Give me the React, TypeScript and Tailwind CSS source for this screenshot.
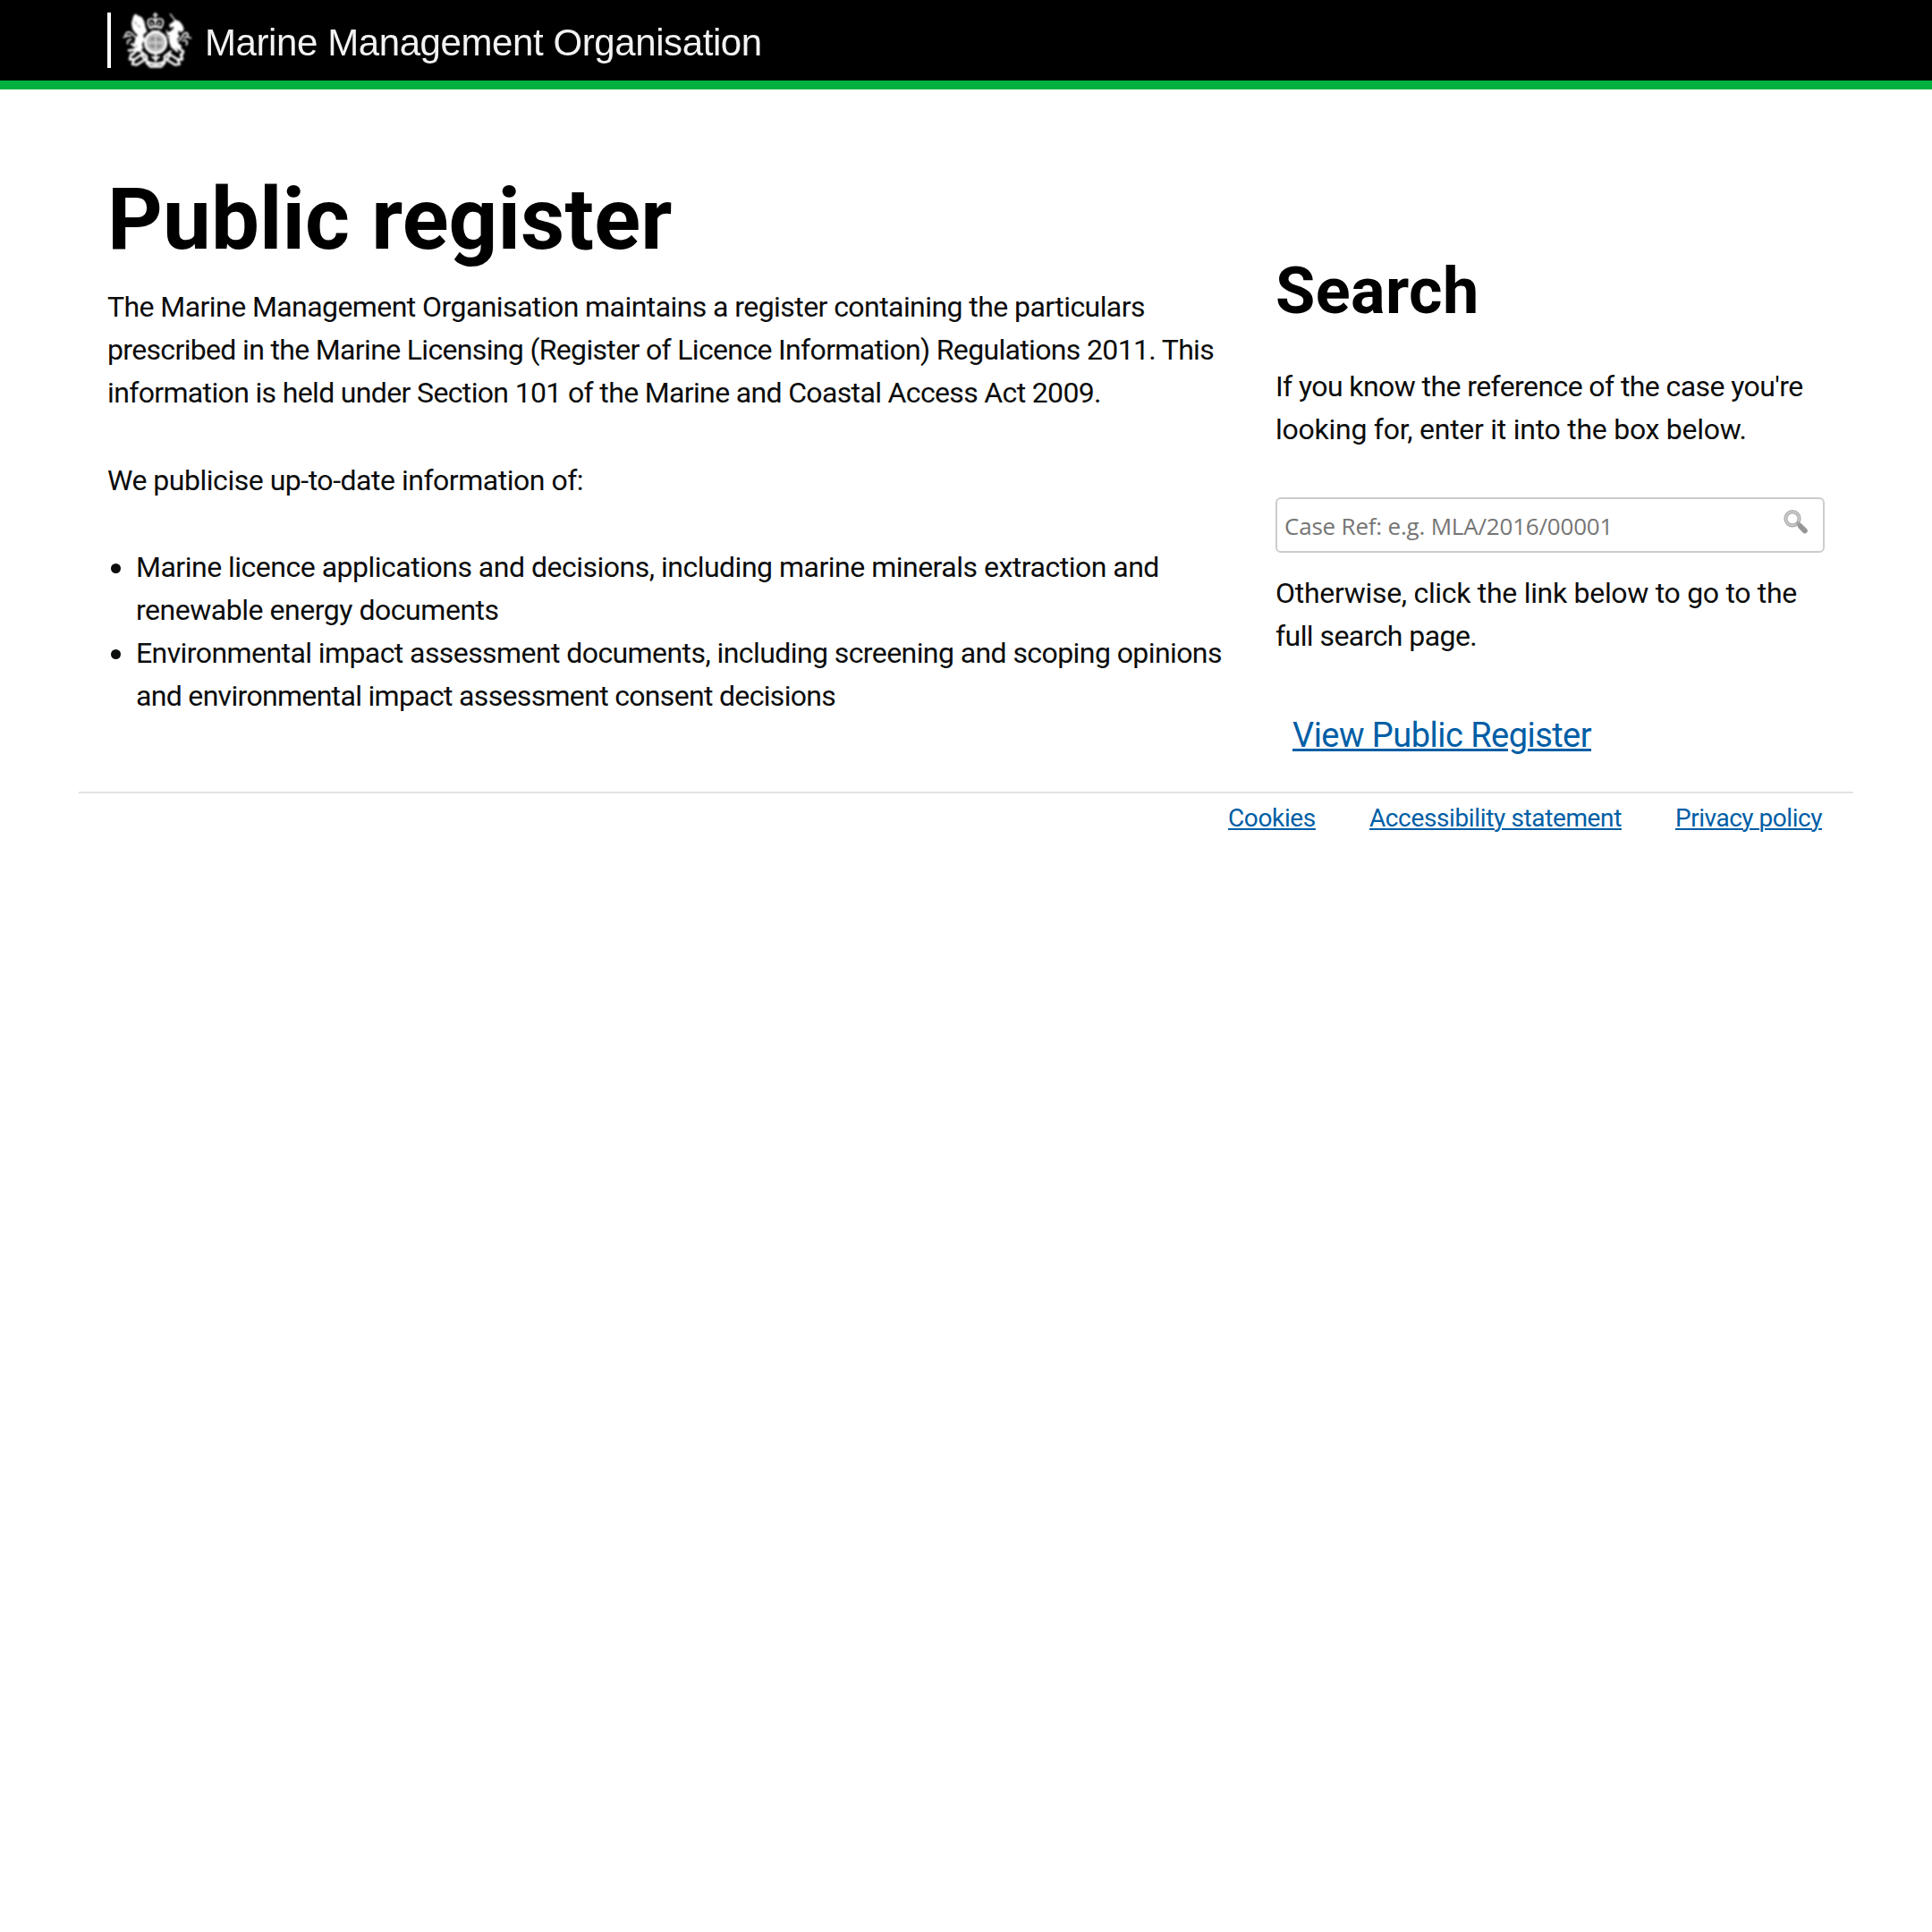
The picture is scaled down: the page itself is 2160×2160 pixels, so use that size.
import type { ReactNode } from "react";

function Line({ className, children }: { className: string; children: ReactNode }) {
  return <span className={`block whitespace-nowrap ${className}`}>{children}</span>;
}

function Crest() {
  return (
    <svg viewBox="0 0 270 240" className="h-[80px] w-[90px] shrink-0 blur-[0.8px]" fill="none" stroke="#fff" strokeLinecap="round" strokeLinejoin="round">
      {/* crown */}
      <path d="M131 29V46M125 35H137" strokeWidth="5" />
      <path d="M112 76C102 60 105 48 118 48C125 48 129 52 131 58C134 52 138 48 145 48C159 48 161 61 151 76" strokeWidth="5" />
      <path d="M131 50V70M117 60L121 68M145 60L141 68" strokeWidth="5" />
      <path d="M113 78Q131 71 150 78" strokeWidth="7" />
      <path d="M118 88H146" stroke="#bbb" strokeWidth="4" />
      {/* shield and garter */}
      <circle cx="132" cy="128" r="35" fill="#a2a2a2" strokeWidth="9" />
      <circle cx="132" cy="128" r="25" stroke="#e2e2e2" strokeWidth="3" />
      <path d="M132 104V152M108 128H156" stroke="#ddd" strokeWidth="4" />
      <path d="M116 114H126M138 116H149M116 140H127M138 141H148" stroke="#777" strokeWidth="4" />
      {/* lion */}
      <path d="M59 40L65 34L72 39L82 43C90 49 94 63 96 77L101 90L88 102L93 117L84 133L88 146L78 158L68 155L72 138L61 133L66 114L74 102L64 93L56 81L53 63Z" fill="#fff" strokeWidth="4" />
      <path d="M63 58L67 66M73 70L79 76" stroke="#999" strokeWidth="4" />
      <path d="M68 112C58 107 54 95 45 93C36 91 29 99 31 105M49 106C42 101 34 107 25 110M50 117C41 118 36 122 38 132" strokeWidth="5" />
      <path d="M72 144C62 154 51 154 42 154M70 152L55 168M52 133L63 140" strokeWidth="8" />
      {/* unicorn */}
      <path d="M181 32L199 56" strokeWidth="4" />
      <path d="M199 54L211 58L221 71L225 84L217 92L209 83L205 98L211 108L202 115L207 131L218 140L211 150L197 144L184 138L179 125L180 105L169 97L184 91L195 80L193 69L183 77L179 69L190 61Z" fill="#fff" strokeWidth="4" />
      <path d="M168 87L175 99M171 106L179 115" strokeWidth="4" />
      <path d="M210 121C222 116 221 95 234 95C242 96 243 105 233 110M228 112C237 105 242 109 250 113M222 122C232 117 242 123 235 136" strokeWidth="5" />
      <path d="M201 140L225 158L218 174M186 140L204 156" strokeWidth="8" />
      {/* ribbon */}
      <path d="M50 167L45 184L60 184L54 200L69 202L96 185L84 168L65 182" strokeWidth="8" />
      <path d="M216 167L222 184L206 184L212 200L197 202L169 185L181 168L202 182" strokeWidth="8" />
      <path d="M84 158L102 174V196L114 208H151L162 196V174L182 158" strokeWidth="8" />
      <path d="M108 194Q132 204 157 194" strokeWidth="9" />
      <path d="M132 168V188M121 176L128 181M143 176L136 181" strokeWidth="7" />
    </svg>
  );
}

function MagnifierIcon() {
  return (
    <svg viewBox="0 0 30 30" className="h-[30px] w-[30px] blur-[0.6px]" fill="none" strokeLinecap="round">
      <circle cx="11" cy="11.8" r="7.6" stroke="#b0b0b0" strokeWidth="4.2" />
      <circle cx="11" cy="11.8" r="7.6" stroke="#d2d2d2" strokeWidth="1.2" />
      <path d="M17.5 17.5L20 20" stroke="#a4a4a4" strokeWidth="4.5" />
      <path d="M20 20.5L24.8 25.4" stroke="#969696" strokeWidth="6" />
    </svg>
  );
}

const link = "text-[#005ea5] underline underline-offset-[2px]";

export default function App() {
  return (
    <div className="min-h-[2160px] bg-white font-['Roboto',sans-serif] text-[32px] leading-[48px] text-[#0b0c0c]">
      <header className="flex h-[100px] items-start border-b-[10px] border-[#00b140] bg-black pl-[120px]">
        <div className="mt-[14px] h-[62px] w-[4px] bg-white" />
        <div className="mt-[5px] ml-[6px]"><Crest /></div>
        <span className="mt-[24px] ml-[9px] font-['Liberation_Sans',sans-serif] text-[42px] leading-[48px] tracking-[-0.41px] whitespace-nowrap text-[#f2f2f2] blur-[0.5px]">
          Marine Management Organisation
        </span>
      </header>

      <main className="flex h-[785px] px-[120px]">
        <section className="w-[1306px] pt-[97px]">
          <h1 className="text-[96px] leading-[96px] font-bold tracking-[0.13px] text-black">Public register</h1>
          <p className="mt-[26px]">
            <Line className="tracking-[-0.57px]">The Marine Management Organisation maintains a register containing the particulars</Line>
            <Line className="tracking-[-0.66px]">prescribed in the Marine Licensing (Register of Licence Information) Regulations 2011. This</Line>
            <Line className="tracking-[-0.65px]">information is held under Section 101 of the Marine and Coastal Access Act 2009.</Line>
          </p>
          <p className="mt-[50px]"><Line className="tracking-[-0.48px]">We publicise up-to-date information of:</Line></p>
          <ul className="mt-[49px]">
            <li className="flex">
              <span className="mt-[20px] mr-[17px] ml-[4px] h-[11px] w-[11px] shrink-0 rounded-full bg-[#0b0c0c]" />
              <div>
                <Line className="tracking-[-0.5px]">Marine licence applications and decisions, including marine minerals extraction and</Line>
                <Line className="tracking-[-0.47px]">renewable energy documents</Line>
              </div>
            </li>
            <li className="flex">
              <span className="mt-[20px] mr-[17px] ml-[4px] h-[11px] w-[11px] shrink-0 rounded-full bg-[#0b0c0c]" />
              <div>
                <Line className="tracking-[-0.58px]">Environmental impact assessment documents, including screening and scoping opinions</Line>
                <Line className="tracking-[-0.68px]">and environmental impact assessment consent decisions</Line>
              </div>
            </li>
          </ul>
        </section>

        <section className="w-[614px] pt-[190px]">
          <h2 className="text-[72px] leading-[72px] font-bold tracking-[0.4px] text-black">Search</h2>
          <p className="mt-[46px]">
            <Line className="tracking-[-0.59px]">If you know the reference of the case you're</Line>
            <Line className="tracking-[-0.26px]">looking for, enter it into the box below.</Line>
          </p>
          <div className="mt-[52px] flex h-[62px] items-start justify-between rounded-[6px] border-2 border-[#cccccc] bg-white pr-[15px] pl-[8px]">
            <span className="mt-[8px] font-['Open_Sans',sans-serif] text-[26px] leading-[44px] tracking-[-0.2px] whitespace-nowrap text-[#757575]">
              Case Ref: e.g. MLA/2016/00001
            </span>
            <div className="mt-[10px]"><MagnifierIcon /></div>
          </div>
          <p className="mt-[21px]">
            <Line className="tracking-[-0.3px]">Otherwise, click the link below to go to the</Line>
            <Line className="tracking-[-0.56px]">full search page.</Line>
          </p>
          <a className={`mt-[63px] ml-[19px] inline-block text-[38px] tracking-[-0.54px] decoration-[3px] ${link}`}>View Public Register</a>
        </section>
      </main>

      <footer className="mx-[88px] flex justify-end gap-[60px] border-t-2 border-[#e3e3e3] pt-[10px] pr-[35px] text-[28px] leading-[36px]">
        <a className={`tracking-[-0.36px] decoration-[2px] ${link}`}>Cookies</a>
        <a className={`tracking-[-0.37px] decoration-[2px] ${link}`}>Accessibility statement</a>
        <a className={`tracking-[-0.47px] decoration-[2px] ${link}`}>Privacy policy</a>
      </footer>
    </div>
  );
}
